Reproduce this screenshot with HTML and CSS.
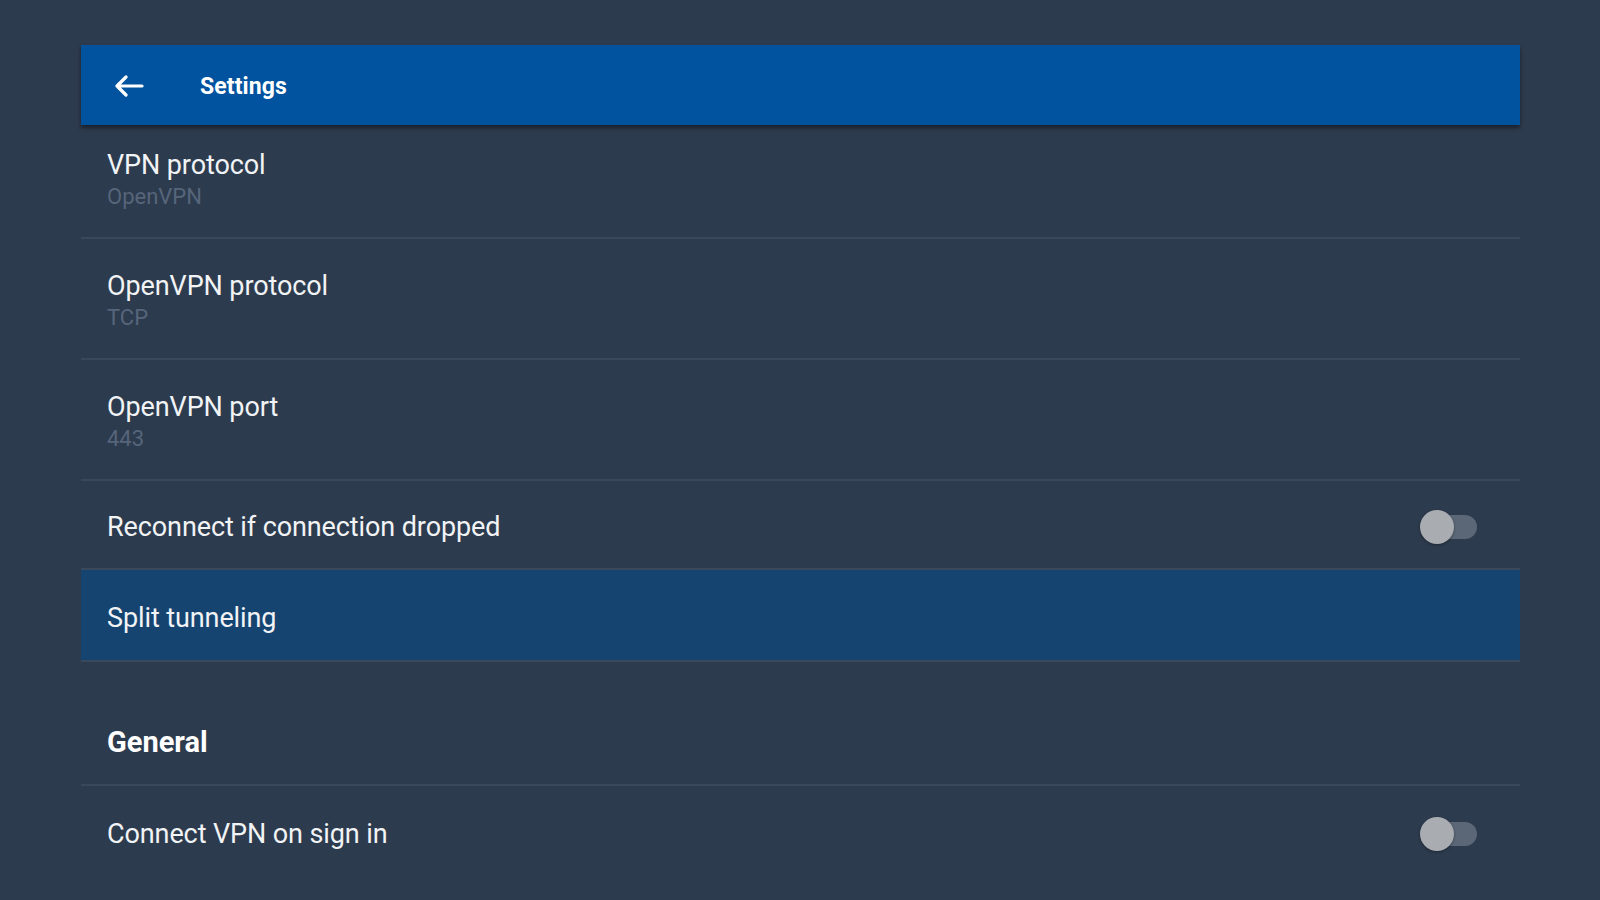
FILE: index.html
```html
<!DOCTYPE html>
<html lang="en">
<head>
<meta charset="utf-8">
<title>Settings</title>
<link rel="stylesheet" href="styles.css">
</head>
<body>
<div class="panel">
  <header class="appbar">
    <svg class="back" width="30" height="22" viewBox="0 0 30 22" aria-hidden="true">
      <path d="M28 11 H3 M12 2 L3 11 L12 20" fill="none" stroke="#ffffff" stroke-width="3.2" stroke-linecap="round" stroke-linejoin="round"/>
    </svg>
    <span class="appbar-title">Settings</span>
  </header>
  <div class="list">
    <div class="row two-line">
      <div class="row-text">
        <div class="title">VPN protocol</div>
        <div class="subtitle">OpenVPN</div>
      </div>
    </div>
    <div class="row two-line">
      <div class="row-text">
        <div class="title">OpenVPN protocol</div>
        <div class="subtitle">TCP</div>
      </div>
    </div>
    <div class="row two-line">
      <div class="row-text">
        <div class="title">OpenVPN port</div>
        <div class="subtitle">443</div>
      </div>
    </div>
    <div class="row one-line toggle-row">
      <div class="title">Reconnect if connection dropped</div>
      <div class="switch"><span class="track"></span><span class="thumb"></span></div>
    </div>
    <div class="row one-line selected">
      <div class="title">Split tunneling</div>
    </div>
    <div class="section-head">
      <div class="section-title">General</div>
    </div>
    <div class="row one-line last">
      <div class="title">Connect VPN on sign in</div>
      <div class="switch"><span class="track"></span><span class="thumb"></span></div>
    </div>
  </div>
</div>
</body>
</html>
```

FILE: styles.css
```css
* {
  box-sizing: border-box;
}

html, body {
  margin: 0;
  padding: 0;
  height: 100%;
  overflow: hidden;
}

body {
  background: #2d3b4e;
  font-family: Roboto, "Noto Sans", "Liberation Sans", sans-serif;
  color: #f1f3f5;
}

.panel {
  margin-left: 81px;
  width: 1439px;
  padding-top: 45px;
}

.appbar {
  position: relative;
  z-index: 1;
  height: 80px;
  background: #0153a0;
  display: flex;
  align-items: center;
  padding-left: 33px;
  padding-top: 2px;
  gap: 56px;
  box-shadow: 0 3px 4px rgba(0, 0, 0, 0.45);
}

.back {
  display: block;
  flex: none;
}

.appbar-title {
  font-size: 23px;
  font-weight: 700;
  color: #ffffff;
  letter-spacing: 0.1px;
}

.list {
  margin-top: -7px;
}

.row {
  display: flex;
  align-items: center;
  justify-content: space-between;
  padding: 0 43px 0 26px;
  border-bottom: 2px solid #3a485b;
}

.two-line {
  height: 121px;
  padding-top: 6px;
}

.one-line {
  height: 92px;
  padding-top: 5px;
}

.toggle-row {
  height: 89px;
  padding-top: 4px;
}

.selected {
  background: #164471;
}

.last {
  height: 96px;
  border-bottom: none;
  padding-top: 0;
}

.title {
  font-size: 27px;
  line-height: 32px;
  color: #f1f3f5;
  letter-spacing: -0.1px;
}

.subtitle {
  font-size: 22px;
  line-height: 32px;
  color: #56657a;
}

.section-head {
  height: 124px;
  display: flex;
  align-items: flex-end;
  padding: 0 26px 26px;
  border-bottom: 2px solid #3a485b;
}

.section-title {
  font-size: 29px;
  line-height: 32px;
  font-weight: 700;
  color: #ffffff;
}

.switch {
  position: relative;
  width: 57px;
  height: 34px;
  flex: none;
}

.track {
  position: absolute;
  left: 5px;
  right: 0;
  top: 5px;
  height: 24px;
  border-radius: 12px;
  background: #5b6777;
}

.thumb {
  position: absolute;
  left: 0;
  top: 0;
  width: 34px;
  height: 34px;
  border-radius: 50%;
  background: #a9adb2;
  box-shadow: 0 1px 3px rgba(0, 0, 0, 0.35);
}
```
